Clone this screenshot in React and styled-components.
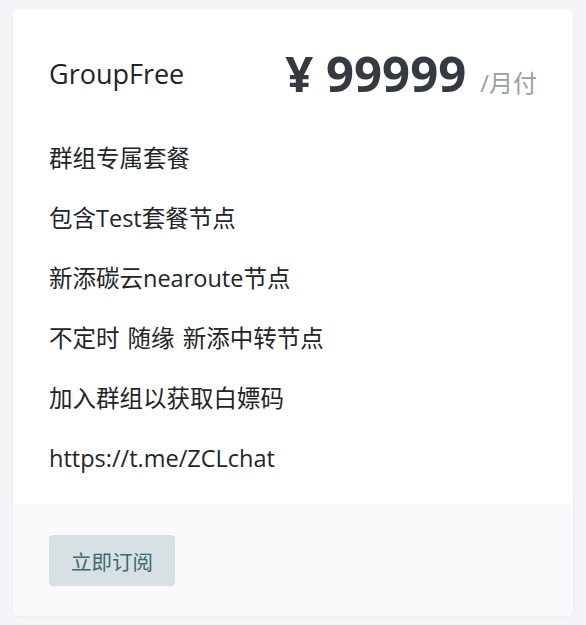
import styled, { createGlobalStyle } from "styled-components";

const Global = createGlobalStyle`
  body {
    margin: 0;
    background: #f4f5f8;
    font-family: "Open Sans", "Noto Sans CJK SC", sans-serif;
    color: #212529;
  }
`;

const Page = styled.div`
  padding: 9px 13px;
`;

const Card = styled.div`
  background: #fff;
  border-radius: 5px;
  box-shadow: 0 1px 3px rgba(30, 40, 60, 0.06);
  overflow: hidden;
`;

const Body = styled.div`
  padding: 31px 36px 16px;
`;

const Header = styled.div`
  display: flex;
  align-items: center;
  justify-content: space-between;
  margin-bottom: 22px;
`;

const Title = styled.div`
  font-size: 27px;
`;

const Price = styled.div`
  display: flex;
  align-items: baseline;
  gap: 14px;
`;

const Amount = styled.span`
  font-size: 49px;
  font-weight: 700;
  color: #343a40;
`;

const Unit = styled.span`
  font-size: 24px;
  color: #9a9ea6;
`;

const Feature = styled.div`
  font-size: 23.5px;
  line-height: 36px;
  padding: 12px 0;
  word-spacing: 2px;
`;

const Footer = styled.div`
  background: #f9fafb;
  padding: 31px 36px 30px;
`;

const Button = styled.button`
  font-family: inherit;
  font-size: 20.5px;
  color: #3b686e;
  background: #d7e1e3;
  border: 0;
  border-radius: 4px;
  height: 51px;
  padding: 0 22px;
`;

const features = [
  "群组专属套餐",
  "包含Test套餐节点",
  "新添碳云nearoute节点",
  "不定时 随缘 新添中转节点",
  "加入群组以获取白嫖码",
  "https://t.me/ZCLchat",
];

const App = () => {
  return (
    <>
      <Global />
      <Page>
        <Card>
          <Body>
            <Header>
              <Title>GroupFree</Title>
              <Price>
                <Amount>¥ 99999</Amount>
                <Unit>/月付</Unit>
              </Price>
            </Header>
            {features.map((f) => (
              <Feature key={f}>{f}</Feature>
            ))}
          </Body>
          <Footer>
            <Button>立即订阅</Button>
          </Footer>
        </Card>
      </Page>
    </>
  );
};

export default App;
